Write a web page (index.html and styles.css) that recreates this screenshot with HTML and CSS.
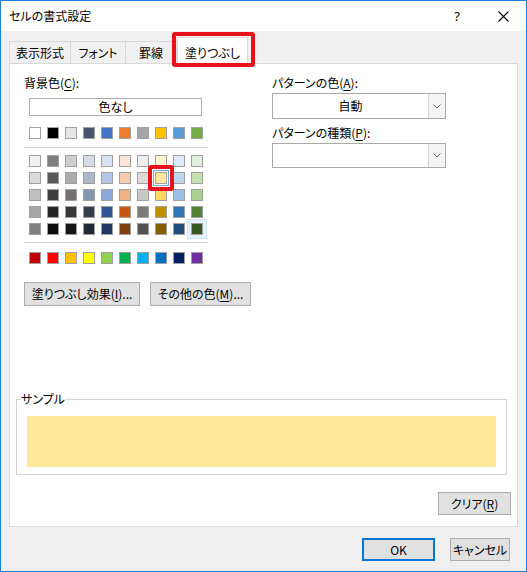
FILE: index.html
```html
<!DOCTYPE html>
<html lang="ja">
<head>
<meta charset="utf-8">
<title>セルの書式設定</title>
<link rel="stylesheet" href="styles.css">
</head>
<body>
<div class="window">
  <div class="titlebar">
    <span class="title">セルの書式設定</span>
    <span class="tb-btn help">?</span>
    <span class="tb-btn close"><svg width="11" height="11" viewBox="0 0 11 11"><path d="M0.5 0.5 L10.5 10.5 M10.5 0.5 L0.5 10.5" stroke="#000" stroke-width="1.1" fill="none"/></svg></span>
  </div>
  <div class="tabs">
    <div class="tab t1">表示形式</div>
    <div class="tab t2">フォント</div>
    <div class="tab t3">罫線</div>
    <div class="tab t4 active">塗りつぶし<span class="mark tab-mark"></span></div>
  </div>
  <div class="panel">
    <div class="top">
      <div class="leftcol">
        <div class="label">背景色(<u>C</u>):</div>
        <div class="nocolor">色なし</div>
        <div class="swatches first">
          <div class="sw" style="background:#FFFFFF"></div>
          <div class="sw" style="background:#000000"></div>
          <div class="sw" style="background:#E7E6E6"></div>
          <div class="sw" style="background:#44546A"></div>
          <div class="sw" style="background:#4472C4"></div>
          <div class="sw" style="background:#ED7D31"></div>
          <div class="sw" style="background:#A5A5A5"></div>
          <div class="sw" style="background:#FFC000"></div>
          <div class="sw" style="background:#5B9BD5"></div>
          <div class="sw" style="background:#70AD47"></div>
        </div>
        <div class="sep"></div>
        <div class="swatches theme">
          <div class="sw" style="background:#F2F2F2"></div>
          <div class="sw" style="background:#7F7F7F"></div>
          <div class="sw" style="background:#D0CECE"></div>
          <div class="sw" style="background:#D6DCE4"></div>
          <div class="sw" style="background:#D9E1F2"></div>
          <div class="sw" style="background:#FCE4D6"></div>
          <div class="sw" style="background:#EDEDED"></div>
          <div class="sw" style="background:#FFF2CC"></div>
          <div class="sw" style="background:#DDEBF7"></div>
          <div class="sw" style="background:#E2EFDA"></div>

          <div class="sw" style="background:#D9D9D9"></div>
          <div class="sw" style="background:#595959"></div>
          <div class="sw" style="background:#AEAAAA"></div>
          <div class="sw" style="background:#ACB9CA"></div>
          <div class="sw" style="background:#B4C6E7"></div>
          <div class="sw" style="background:#F8CBAD"></div>
          <div class="sw" style="background:#DBDBDB"></div>
          <div class="sw selected" style="background:#FFE699"><span class="mark sw-mark"></span></div>
          <div class="sw" style="background:#BDD7EE"></div>
          <div class="sw" style="background:#C6E0B4"></div>

          <div class="sw" style="background:#BFBFBF"></div>
          <div class="sw" style="background:#404040"></div>
          <div class="sw" style="background:#757171"></div>
          <div class="sw" style="background:#8497B0"></div>
          <div class="sw" style="background:#8EA9DB"></div>
          <div class="sw" style="background:#F4B084"></div>
          <div class="sw" style="background:#C9C9C9"></div>
          <div class="sw" style="background:#FFD966"></div>
          <div class="sw" style="background:#9BC2E6"></div>
          <div class="sw" style="background:#A9D08E"></div>

          <div class="sw" style="background:#A6A6A6"></div>
          <div class="sw" style="background:#262626"></div>
          <div class="sw" style="background:#3A3838"></div>
          <div class="sw" style="background:#333F4F"></div>
          <div class="sw" style="background:#305496"></div>
          <div class="sw" style="background:#C65911"></div>
          <div class="sw" style="background:#7B7B7B"></div>
          <div class="sw" style="background:#BF8F00"></div>
          <div class="sw" style="background:#2F75B5"></div>
          <div class="sw" style="background:#548235"></div>

          <div class="sw" style="background:#808080"></div>
          <div class="sw" style="background:#0D0D0D"></div>
          <div class="sw" style="background:#161616"></div>
          <div class="sw" style="background:#222B35"></div>
          <div class="sw" style="background:#203764"></div>
          <div class="sw" style="background:#833C0C"></div>
          <div class="sw" style="background:#525252"></div>
          <div class="sw" style="background:#806000"></div>
          <div class="sw" style="background:#1F4E78"></div>
          <div class="sw hover" style="background:#375623"></div>
        </div>
        <div class="sep"></div>
        <div class="swatches std">
          <div class="sw" style="background:#C00000"></div>
          <div class="sw" style="background:#FF0000"></div>
          <div class="sw" style="background:#FFC000"></div>
          <div class="sw" style="background:#FFFF00"></div>
          <div class="sw" style="background:#92D050"></div>
          <div class="sw" style="background:#00B050"></div>
          <div class="sw" style="background:#00B0F0"></div>
          <div class="sw" style="background:#0070C0"></div>
          <div class="sw" style="background:#002060"></div>
          <div class="sw" style="background:#7030A0"></div>
        </div>
        <div class="btnrow">
          <button class="btn effect">塗りつぶし効果(<u>I</u>)...</button>
          <button class="btn other">その他の色(<u>M</u>)...</button>
        </div>
      </div>
      <div class="rightcol">
        <div class="label">パターンの色(<u>A</u>):</div>
        <div class="select s1"><span class="val">自動</span><span class="arrow"><svg width="8" height="5" viewBox="0 0 8 5"><path d="M0.5 0.5 L4 4 L7.5 0.5" stroke="#606060" stroke-width="1" fill="none"/></svg></span></div>
        <div class="label l2">パターンの種類(<u>P</u>):</div>
        <div class="select s2"><span class="val"></span><span class="arrow"><svg width="8" height="5" viewBox="0 0 8 5"><path d="M0.5 0.5 L4 4 L7.5 0.5" stroke="#606060" stroke-width="1" fill="none"/></svg></span></div>
      </div>
    </div>
    <fieldset class="sample">
      <legend>サンプル</legend>
      <div class="fill"></div>
    </fieldset>
    <div class="clearrow"><button class="btn clear">クリア(<u>R</u>)</button></div>
  </div>
  <div class="footer">
    <button class="btn ok">OK</button>
    <button class="btn cancel">キャンセル</button>
  </div>
</div>
</body>
</html>
```

FILE: styles.css
```css
html, body {
  margin: 0;
  padding: 0;
  background: #f0f0f0;
}

.window {
  width: 527px;
  height: 572px;
  box-sizing: border-box;
  border: 1px solid #1c7fd6;
  background: #f0f0f0;
  display: flex;
  flex-direction: column;
  font-family: "Noto Sans CJK JP", "Noto Sans", sans-serif;
  font-size: 12px;
  font-feature-settings: "palt";
  color: #000;
}

u {
  text-decoration: underline;
  text-underline-offset: 2px;
}

.titlebar {
  height: 30px;
  flex: none;
  background: #fff;
  display: flex;
  align-items: center;
}

.title {
  flex: 1;
  padding-left: 8px;
  line-height: 16px;
}

.tb-btn {
  width: 46px;
  height: 30px;
  display: flex;
  align-items: center;
  justify-content: center;
}

.help {
  font-family: "Noto Sans", sans-serif;
  font-size: 13px;
}

.tabs {
  height: 32px;
  flex: none;
  display: flex;
  align-items: flex-end;
  padding-left: 8px;
}

.tab {
  box-sizing: border-box;
  height: 22px;
  border: 1px solid #d9d9d9;
  border-bottom: none;
  background: #f0f0f0;
  display: flex;
  align-items: center;
  justify-content: center;
  line-height: 16px;
}

.t1 { width: 62px; }
.t2 { width: 56px; margin-left: -1px; }
.t3 { width: 52px; margin-left: -1px; }

.t4 {
  width: 71px;
  height: 27px;
  margin-bottom: -1px;
  background: #fff;
  position: relative;
  z-index: 1;
  padding-top: 3px;
}

.mark {
  position: absolute;
  box-sizing: border-box;
  border: 4px solid #e8121c;
  border-radius: 3px;
  pointer-events: none;
}

.tab-mark {
  left: -6px;
  top: -6px;
  width: 83px;
  height: 35px;
}

.panel {
  margin: 0 8px;
  height: 464px;
  flex: none;
  box-sizing: border-box;
  border: 1px solid #d9d9d9;
  background: #fff;
  display: flex;
  flex-direction: column;
}

.top {
  display: flex;
  padding: 11px 0 0 14px;
}

.leftcol {
  width: 184px;
  flex: none;
  display: flex;
  flex-direction: column;
}

.label {
  line-height: 16px;
  height: 16px;
}

.nocolor {
  margin: 7px 0 0 5px;
  width: 173px;
  height: 18px;
  box-sizing: border-box;
  border: 1px solid #adadad;
  text-align: center;
  line-height: 16px;
}

.swatches {
  display: grid;
  grid-template-columns: repeat(10, 12px);
  column-gap: 6px;
  row-gap: 5px;
  margin-left: 5px;
}

.swatches.first { margin-top: 11px; }
.swatches.theme { margin-top: 7px; }
.swatches.std { margin-top: 9px; }

.sw {
  width: 12px;
  height: 12px;
  box-sizing: border-box;
  border: 1px solid #a0a0a0;
}

.sw.selected {
  position: relative;
  box-shadow: 0 0 0 1px #fff, 0 0 0 2px #6fa8dc;
}

.sw.hover {
  box-shadow: 0 0 0 3px #e5f1fb, 0 0 0 4px #cce4f7;
}

.sw-mark {
  left: -8px;
  top: -8px;
  width: 26px;
  height: 26px;
}

.sep {
  height: 1px;
  background: #d4d4d4;
}

.leftcol .sep { margin-top: 8px; }
.swatches.theme + .sep { margin-top: 7px; }

.btnrow {
  display: flex;
  gap: 10px;
  margin-top: 18px;
  width: 240px;
}

.btn {
  font: inherit;
  font-feature-settings: "palt";
  color: #000;
  background: #e1e1e1;
  border: 1px solid #adadad;
  padding: 0;
  box-sizing: border-box;
  line-height: 16px;
  white-space: nowrap;
  flex: none;
}

.effect { width: 116px; height: 24px; }
.other { width: 101px; height: 24px; }

.rightcol {
  width: 174px;
  flex: none;
  margin-left: 64px;
  display: flex;
  flex-direction: column;
}

.label.l2 { margin-top: 6px; }

.select {
  margin-top: 2px;
  box-sizing: border-box;
  border: 1px solid #a9a9a9;
  background: #fff;
  display: flex;
}

.select.s1 { height: 26px; }
.select.s2 { height: 25px; }

.val {
  flex: 1;
  display: flex;
  align-items: center;
  justify-content: center;
  line-height: 16px;
}

.arrow {
  width: 16px;
  border-left: 1px solid #d0d0d0;
  background: #f4f4f4;
  display: flex;
  align-items: center;
  justify-content: center;
}

.sample {
  margin: 85px 0 0 6px;
  width: 491px;
  min-inline-size: 0;
  box-sizing: border-box;
  border: 1px solid #d5d5d5;
  padding: 9px 10px 7px 10px;
}

.sample legend {
  padding: 0;
  margin-left: -6px;
  line-height: 16px;
  height: 16px;
}

.fill {
  height: 51px;
  background: #ffe699;
}

.clearrow {
  display: flex;
  justify-content: flex-end;
  margin-top: 17px;
  padding-right: 6px;
}

.clear { width: 73px; height: 23px; }

.footer {
  display: flex;
  justify-content: flex-end;
  gap: 15px;
  padding: 11px 16px 0 0;
}

.ok {
  width: 73px;
  height: 23px;
  border: 2px solid #0078d7;
}

.cancel { width: 60px; height: 23px; }
```
